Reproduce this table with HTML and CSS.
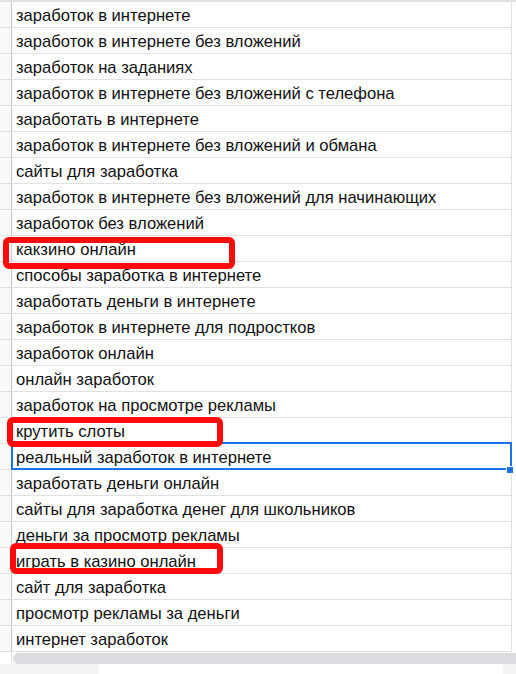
FILE: index.html
```html
<!DOCTYPE html>
<html lang="ru">
<head>
<meta charset="utf-8">
<link rel="stylesheet" href="styles.css">
</head>
<body>
<div class="sheet">
  <div class="row"><div class="hdr"></div><div class="cell">заработок в интернете</div></div>
  <div class="row"><div class="hdr"></div><div class="cell">заработок в интернете без вложений</div></div>
  <div class="row"><div class="hdr"></div><div class="cell">заработок на заданиях</div></div>
  <div class="row"><div class="hdr"></div><div class="cell">заработок в интернете без вложений с телефона</div></div>
  <div class="row"><div class="hdr"></div><div class="cell">заработать в интернете</div></div>
  <div class="row"><div class="hdr"></div><div class="cell">заработок в интернете без вложений и обмана</div></div>
  <div class="row"><div class="hdr"></div><div class="cell">сайты для заработка</div></div>
  <div class="row"><div class="hdr"></div><div class="cell">заработок в интернете без вложений для начинающих</div></div>
  <div class="row"><div class="hdr"></div><div class="cell">заработок без вложений</div></div>
  <div class="row"><div class="hdr"></div><div class="cell">какзино онлайн</div><span class="mark mark-1"></span></div>
  <div class="row"><div class="hdr"></div><div class="cell">способы заработка в интернете</div></div>
  <div class="row"><div class="hdr"></div><div class="cell">заработать деньги в интернете</div></div>
  <div class="row"><div class="hdr"></div><div class="cell">заработок в интернете для подростков</div></div>
  <div class="row"><div class="hdr"></div><div class="cell">заработок онлайн</div></div>
  <div class="row"><div class="hdr"></div><div class="cell">онлайн заработок</div></div>
  <div class="row"><div class="hdr"></div><div class="cell">заработок на просмотре рекламы</div></div>
  <div class="row"><div class="hdr"></div><div class="cell">крутить слоты</div><span class="mark mark-2"></span></div>
  <div class="row"><div class="hdr"></div><div class="cell selected">реальный заработок в интернете<span class="handle"></span></div></div>
  <div class="row"><div class="hdr"></div><div class="cell">заработать деньги онлайн</div></div>
  <div class="row"><div class="hdr"></div><div class="cell">сайты для заработка денег для школьников</div></div>
  <div class="row"><div class="hdr"></div><div class="cell">деньги за просмотр рекламы</div></div>
  <div class="row"><div class="hdr"></div><div class="cell">играть в казино онлайн</div><span class="mark mark-3"></span></div>
  <div class="row"><div class="hdr"></div><div class="cell">сайт для заработка</div></div>
  <div class="row"><div class="hdr"></div><div class="cell">просмотр рекламы за деньги</div></div>
  <div class="row"><div class="hdr"></div><div class="cell">интернет заработок</div></div>
</div>
<div class="hscroll">
  <div class="hscroll-gap"></div>
  <div class="hscroll-thumb"></div>
</div>
<div class="tabs">
  <div class="tabs-left"></div>
  <div class="tabs-mid"></div>
  <div class="tabs-right"></div>
</div>
</body>
</html>
```

FILE: styles.css
```css
* { box-sizing: border-box; }
html, body { margin: 0; padding: 0; background: #fff; }
body {
  width: 516px;
  height: 674px;
  overflow: hidden;
  font-family: "Liberation Sans", Arial, sans-serif;
  font-size: 16.6px;
  color: #111;
}
.sheet {
  border-top: 2px solid #e1e1e1;
}
.row {
  position: relative;
  display: flex;
  height: 26px;
}
.hdr {
  width: 12px;
  flex: none;
  background: #f8f9fa;
  border-right: 1px solid #c7c7c7;
  border-bottom: 1px solid #e1e1e1;
}
.cell {
  position: relative;
  width: 500px;
  flex: none;
  border-right: 1px solid #e1e1e1;
  border-bottom: 1px solid #e1e1e1;
  padding: 2px 0 0 4px;
  line-height: 24px;
  white-space: nowrap;
}
.selected::after {
  content: "";
  position: absolute;
  left: -1px;
  top: -2px;
  right: -1px;
  bottom: -1px;
  border: 2px solid #1a73e8;
  pointer-events: none;
}
.handle {
  position: absolute;
  right: -3px;
  bottom: -5px;
  width: 8px;
  height: 8px;
  background: #1a73e8;
  border: 1px solid #fff;
  z-index: 2;
}
.mark {
  position: absolute;
  border: 6px solid #ff0a0a;
  border-radius: 6px;
  z-index: 3;
}
.mark-1 { left: 3px; top: 1px; width: 232px; height: 32px; }
.mark-2 { left: 7px; top: -1px; width: 216px; height: 30px; }
.mark-3 { left: 10px; top: -5px; width: 213px; height: 31px; }

.hscroll {
  display: flex;
  height: 12px;
}
.hscroll-gap {
  width: 12px;
  flex: none;
  border-right: 1px solid #e1e1e1;
}
.hscroll-thumb {
  flex: 1;
  margin: 1px 0 0 1px;
  background: #dadce0;
  border-radius: 6px 0 0 6px;
}
.tabs {
  display: flex;
  height: 10px;
  background: #f1f3f4;
}
.tabs-left { width: 99px; flex: none; }
.tabs-mid { width: 404px; flex: none; background: #fff; }
.tabs-right { flex: 1; }
```
